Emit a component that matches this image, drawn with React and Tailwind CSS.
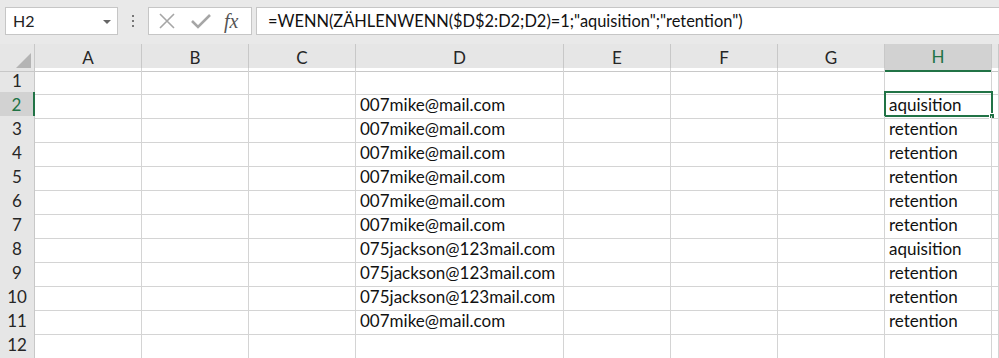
import React from 'react';

const cols = ['A', 'B', 'C', 'D', 'E', 'F', 'G', 'H', ''];

const rows = [
  ['', ''],
  ['007mike@mail.com', 'aquisition'],
  ['007mike@mail.com', 'retention'],
  ['007mike@mail.com', 'retention'],
  ['007mike@mail.com', 'retention'],
  ['007mike@mail.com', 'retention'],
  ['007mike@mail.com', 'retention'],
  ['075jackson@123mail.com', 'aquisition'],
  ['075jackson@123mail.com', 'retention'],
  ['075jackson@123mail.com', 'retention'],
  ['007mike@mail.com', 'retention'],
  ['', ''],
  ['', ''],
];

const gridCols = 'grid grid-cols-[35px_107px_107px_107px_208px_107px_107px_107px_107px_1fr]';

function FormulaBar() {
  return (
    <div className="flex h-[44px] items-start gap-0 bg-[#e9e9e9] pt-[7px] pl-[5px]">
      <div className="flex h-[28px] w-[113px] items-center justify-between border border-[#c6c6c6] bg-white pl-[7px] pr-[6px]">
        <span className="text-[16px] text-[#222]">H2</span>
        <span className="mt-[1px] h-0 w-0 border-x-[4px] border-t-[4px] border-x-transparent border-t-[#666]" />
      </div>
      <div className="flex h-[28px] w-[30px] flex-col items-center justify-center gap-[3px]">
        <span className="h-[2px] w-[2px] bg-[#777]" />
        <span className="h-[2px] w-[2px] bg-[#777]" />
        <span className="h-[2px] w-[2px] bg-[#777]" />
      </div>
      <div className="flex h-[28px] w-[104px] items-center border border-[#c6c6c6] bg-white">
        <svg width="20" height="20" viewBox="0 0 20 20" className="ml-[8px]">
          <path d="M3 3 L17 17 M17 3 L3 17" stroke="#a6a6a6" strokeWidth="1.6" fill="none" />
        </svg>
        <svg width="22" height="20" viewBox="0 0 22 20" className="ml-[13px]">
          <path d="M2 10 L8 16 L20 4" stroke="#a6a6a6" strokeWidth="2.6" fill="none" />
        </svg>
        <span className="ml-[12px] text-[20px] italic leading-none text-[#555] [font-family:'Liberation_Serif',serif]">
          fx
        </span>
      </div>
      <div className="ml-[4px] flex h-[28px] flex-1 items-center border border-r-0 border-[#c6c6c6] bg-white pl-[11px]">
        <span className="text-[16.4px] text-[#111]">
          =WENN(ZÄHLENWENN($D$2:D2;D2)=1;"aquisition";"retention")
        </span>
      </div>
    </div>
  );
}

export default function App() {
  return (
    <div className="h-[358px] w-[999px] overflow-hidden bg-white [font-family:Lato,'Open_Sans',sans-serif]">
      <FormulaBar />
      <div className={`${gridCols} h-[24px] bg-[#e6e6e6]`}>
        <div className="relative border-r border-b border-[#c8c8c8]">
          <div className="absolute right-[3px] bottom-[3px] h-0 w-0 border-b-[15px] border-l-[15px] border-b-[#b4b4b4] border-l-transparent" />
        </div>
        {cols.map((c, i) =>
          c === 'H' ? (
            <div
              key={i}
              className="flex items-center justify-center border-r border-b-2 border-r-[#c8c8c8] border-b-[#217346] bg-[#d2d2d2] text-[17px] text-[#217346]"
            >
              {c}
            </div>
          ) : (
            <div
              key={i}
              className="flex items-center justify-center border-r border-b border-[#c8c8c8] text-[17px] text-[#262626]"
            >
              {c}
            </div>
          )
        )}
      </div>
      {rows.map((r, ri) => {
        const n = ri + 1;
        const sel = n === 2;
        return (
          <div key={ri} className={`${gridCols} h-[24px]`}>
            <div
              className={
                sel
                  ? 'flex items-center justify-center border-r-2 border-b border-r-[#217346] border-b-[#c8c8c8] bg-[#d2d2d2] text-[17px] text-[#217346]'
                  : 'flex items-center justify-center border-r border-b border-[#c8c8c8] bg-[#e6e6e6] text-[17px] text-[#262626]'
              }
            >
              {n <= 12 ? n : ''}
            </div>
            {cols.map((c, ci) => {
              let text = '';
              if (c === 'D') text = r[0];
              if (c === 'H') text = r[1];
              return (
                <div
                  key={ci}
                  className="relative flex items-center overflow-visible whitespace-nowrap border-r border-b border-[#d4d4d4] pl-[4px] text-[17px] text-[#111]"
                >
                  {text}
                  {sel && c === 'H' && (
                    <div className="absolute -top-[1px] -left-[1px] h-[26px] w-[109px] border-2 border-[#217346]">
                      <div className="absolute -right-[4px] -bottom-[4px] h-[6px] w-[6px] border border-white bg-[#217346]" />
                    </div>
                  )}
                </div>
              );
            })}
          </div>
        );
      })}
    </div>
  );
}
